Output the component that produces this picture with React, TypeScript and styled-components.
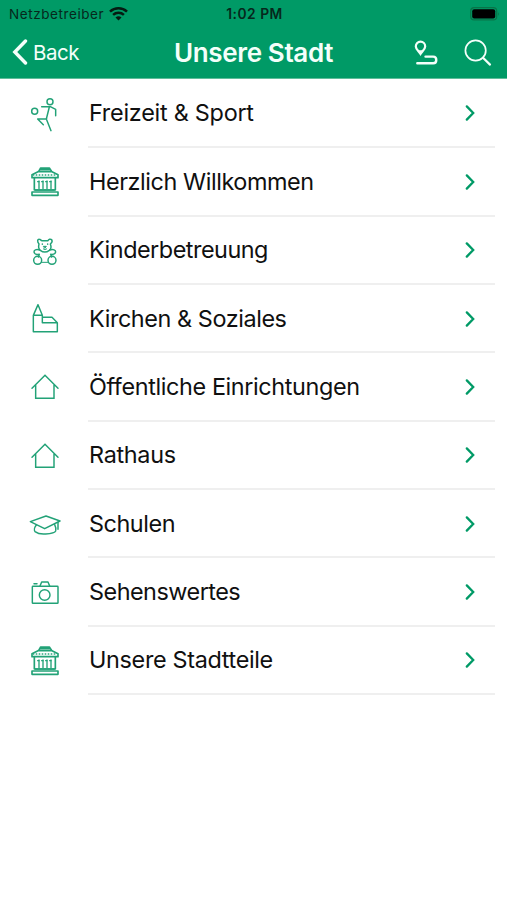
import React from 'react';
import styled, { createGlobalStyle } from 'styled-components';

const GREEN = '#009a66';

const GlobalStyle = createGlobalStyle`
  * { box-sizing: border-box; }
  body { margin: 0; background: #fff; font-family: Inter, "Liberation Sans", sans-serif; }
  svg { display: block; flex: none; }
`;

const Screen = styled.div`
  width: 507px;
  height: 900px;
  background: #fff;
  overflow: hidden;
`;

const Header = styled.header`
  height: 79px;
  background: ${GREEN};
  border-bottom: 1px solid #5fbd9a;
`;

const StatusBar = styled.div`
  height: 27px;
  padding: 0 7px 0 9px;
  display: grid;
  grid-template-columns: 1fr auto 1fr;
  align-items: center;
  color: #06281c;
  font-size: 13.5px;
`;

const Carrier = styled.div`
  display: flex;
  align-items: center;
  gap: 5px;
  letter-spacing: 0.58px;
`;

const Clock = styled.div`
  font-weight: 600;
  font-size: 13.8px;
  letter-spacing: 0.5px;
`;

const BatterySlot = styled.div`
  display: flex;
  justify-content: flex-end;
`;

const NavBar = styled.nav`
  height: 51px;
  padding: 0 14px 0 12px;
  display: grid;
  grid-template-columns: 1fr auto 1fr;
  align-items: center;
  color: #f4fffa;
`;

const BackButton = styled.button`
  display: flex;
  align-items: center;
  gap: 5px;
  padding: 0 0 1px;
  border: 0;
  background: none;
  color: inherit;
  font: inherit;
  font-size: 20.5px;
  letter-spacing: -0.5px;
`;

const Title = styled.h1`
  margin: 0;
  padding-left: 2px;
  font-size: 26px;
  line-height: 32px;
  font-weight: 600;
  letter-spacing: -0.35px;
`;

const Actions = styled.div`
  display: flex;
  justify-content: flex-end;
  align-items: center;
  gap: 26px;
`;

const List = styled.ul`
  margin: 0;
  padding: 0.8px 0 0;
  list-style: none;
`;

const Row = styled.li`
  height: 68.38px;
  padding: 0 12px 0 20px;
  display: grid;
  grid-template-columns: 50px 1fr;
  column-gap: 18px;
  align-items: center;
  color: ${GREEN};
`;

const RowBody = styled.div`
  height: 100%;
  padding: 1px 19px 0 1px;
  display: flex;
  align-items: center;
  justify-content: space-between;
  border-bottom: 2px solid #efefef;
`;

const Label = styled.span<{ $spacing: number }>`
  color: #101010;
  font-size: 23.4px;
  line-height: 30px;
  letter-spacing: ${(p) => p.$spacing}px;
  white-space: nowrap;
`;

const Glyph = styled.svg.attrs({ width: 50, height: 50, viewBox: '0 0 150 150' })`
  fill: none;
  stroke: #22a277;
  stroke-width: 4.4;
  stroke-linejoin: round;
  stroke-linecap: round;
`;

const SportIcon = () => (
  <Glyph>
    <circle cx="90" cy="38" r="9" />
    <circle cx="44" cy="67" r="9" />
    <path d="M65 53H91L107 61V80M88 54L79 90L93 125M80 89L53 90L70 107" />
  </Glyph>
);

const TownHallIcon = () => (
  <Glyph>
    <path d="M57 42L62 33H88L94 42M60 38H91" strokeWidth="5" />
    <path d="M54 44H96L114 53V62H36V53Z" strokeWidth="5" />
    <path d="M40 54H111" strokeWidth="5" strokeDasharray="1 8" />
    <path d="M43 63V99H106V63M36 105H114V115H36Z" strokeWidth="5" />
    <path d="M57 72V95M69 72V95M81 72V95M93 72V95" strokeWidth="4" />
    <path d="M53 74H57M65 74H69M77 74H81M89 74H93M46 99H103" strokeWidth="4" />
  </Glyph>
);

const BearIcon = () => (
  <Glyph>
    <path d="M57 54C51 47 52 39 58 40C61 40 63 43 65 44H84C86 40 91 38 95 41C98 46 95 51 91 54C94 61 93 69 88 73C80 79 69 79 61 73C56 69 55 61 57 54Z" />
    <path d="M59 72C48 69 42 72 42 78C43 84 51 86 58 85L55 93M89 72C100 69 107 72 107 78C106 84 99 86 92 85L95 93" />
    <circle cx="53" cy="103" r="12" />
    <circle cx="96" cy="103" r="12" />
    <path d="M64 109H85M70 69Q75 73 80 69" strokeWidth="3" />
    <path d="M71 61H79L75 66Z" fill="#22a277" strokeWidth="3" />
    <path d="M67 54V55M83 54V55" />
  </Glyph>
);

const ChurchIcon = () => (
  <Glyph>
    <path d="M40 64L54 32L67 64V86H112V113H40V64H66M67 70H96L112 86" />
  </Glyph>
);

const HouseIcon = () => (
  <Glyph>
    <path d="M36 79L75 40L114 79M47 70V109H102V70" strokeLinejoin="miter" />
  </Glyph>
);

const CapIcon = () => (
  <Glyph>
    <path d="M31 68L78 51L120 66L74 89Z" />
    <path d="M49 78C43 85 42 94 45 98C53 104 66 106 77 105C91 104 105 101 107 96C109 90 107 83 104 77M114 70V91" />
  </Glyph>
);

const CameraIcon = () => (
  <Glyph>
    <rect x="37" y="55" width="77" height="51" rx="2" />
    <circle cx="74" cy="81" r="16" />
    <path d="M60 54L65 42H84L89 54M42 47H51" />
  </Glyph>
);

const Wifi = () => (
  <svg width="19" height="14" viewBox="0 0 19 14" fill="none" stroke="#051b12" strokeWidth="2.5">
    <path d="M1 4.7C5.7 0.2 13.3 0.2 18 4.7M4.1 7.8C7.1 5 11.9 5 14.9 7.8" />
    <path d="M9.5 13.4L6.5 10.4Q9.5 7.9 12.5 10.4Z" fill="#051b12" stroke="none" />
  </svg>
);

const Battery = () => (
  <svg width="30" height="14" viewBox="0 0 30 14">
    <rect x="0.7" y="0.7" width="26" height="12.2" rx="3.5" fill="none" stroke="#087448" strokeWidth="1.2" />
    <rect x="2.2" y="2.2" width="23" height="9.2" rx="2" fill="#000" />
    <path d="M28.2 5V9Q30 7 28.2 5Z" fill="#087448" />
  </svg>
);

const BackChevron = () => (
  <svg width="16" height="26" viewBox="0 0 16 26" fill="none" stroke="currentColor" strokeWidth="3.4" strokeLinecap="round" strokeLinejoin="miter">
    <path d="M13.5 2L2.8 13L13.5 24" />
  </svg>
);

const RouteIcon = () => (
  <svg width="24" height="26" viewBox="0 0 24 26" fill="none" stroke="currentColor" strokeLinecap="round">
    <path d="M6.5 14C4.8 11.2 1.8 9.2 1.8 6.4A4.7 4.7 0 0 1 11.2 6.4C11.2 9.2 8.2 11.2 6.5 14Z" strokeWidth="2.2" />
    <path d="M4.5 10.3H8.5L6.5 13.5Z" fill="currentColor" stroke="none" />
    <path d="M11.5 16.6H19.2C23.3 16.6 23.3 23.2 19.2 23.2H3.3" strokeWidth="2.4" />
  </svg>
);

const SearchIcon = () => (
  <svg width="29" height="28" viewBox="0 0 29 28" fill="none" stroke="currentColor" strokeWidth="1.7" strokeLinecap="round">
    <circle cx="11.6" cy="11.5" r="10.2" />
    <path d="M19 18.8L26 25.6" strokeWidth="2.2" />
  </svg>
);

const RowChevron = () => (
  <svg width="12" height="20" viewBox="0 0 12 20" fill="none" stroke={GREEN} strokeWidth="2.3" strokeLinecap="round">
    <path d="M2.8 3.4L9.2 10L2.8 16.6" />
  </svg>
);

const items = [
  { label: 'Freizeit & Sport', icon: SportIcon, spacing: -0.25 },
  { label: 'Herzlich Willkommen', icon: TownHallIcon, spacing: -0.42 },
  { label: 'Kinderbetreuung', icon: BearIcon, spacing: -0.48 },
  { label: 'Kirchen & Soziales', icon: ChurchIcon, spacing: -0.42 },
  { label: 'Öffentliche Einrichtungen', icon: HouseIcon, spacing: -0.38 },
  { label: 'Rathaus', icon: HouseIcon, spacing: -0.3 },
  { label: 'Schulen', icon: CapIcon, spacing: -0.45 },
  { label: 'Sehenswertes', icon: CameraIcon, spacing: -0.5 },
  { label: 'Unsere Stadtteile', icon: TownHallIcon, spacing: -0.33 },
];

export default function App() {
  return (
    <Screen>
      <GlobalStyle />
      <Header>
        <StatusBar>
          <Carrier>Netzbetreiber <Wifi /></Carrier>
          <Clock>1:02 PM</Clock>
          <BatterySlot><Battery /></BatterySlot>
        </StatusBar>
        <NavBar>
          <BackButton><BackChevron />Back</BackButton>
          <Title>Unsere Stadt</Title>
          <Actions><RouteIcon /><SearchIcon /></Actions>
        </NavBar>
      </Header>
      <List>
        {items.map(({ label, icon: Icon, spacing }) => (
          <Row key={label}>
            <Icon />
            <RowBody>
              <Label $spacing={spacing}>{label}</Label>
              <RowChevron />
            </RowBody>
          </Row>
        ))}
      </List>
    </Screen>
  );
}
